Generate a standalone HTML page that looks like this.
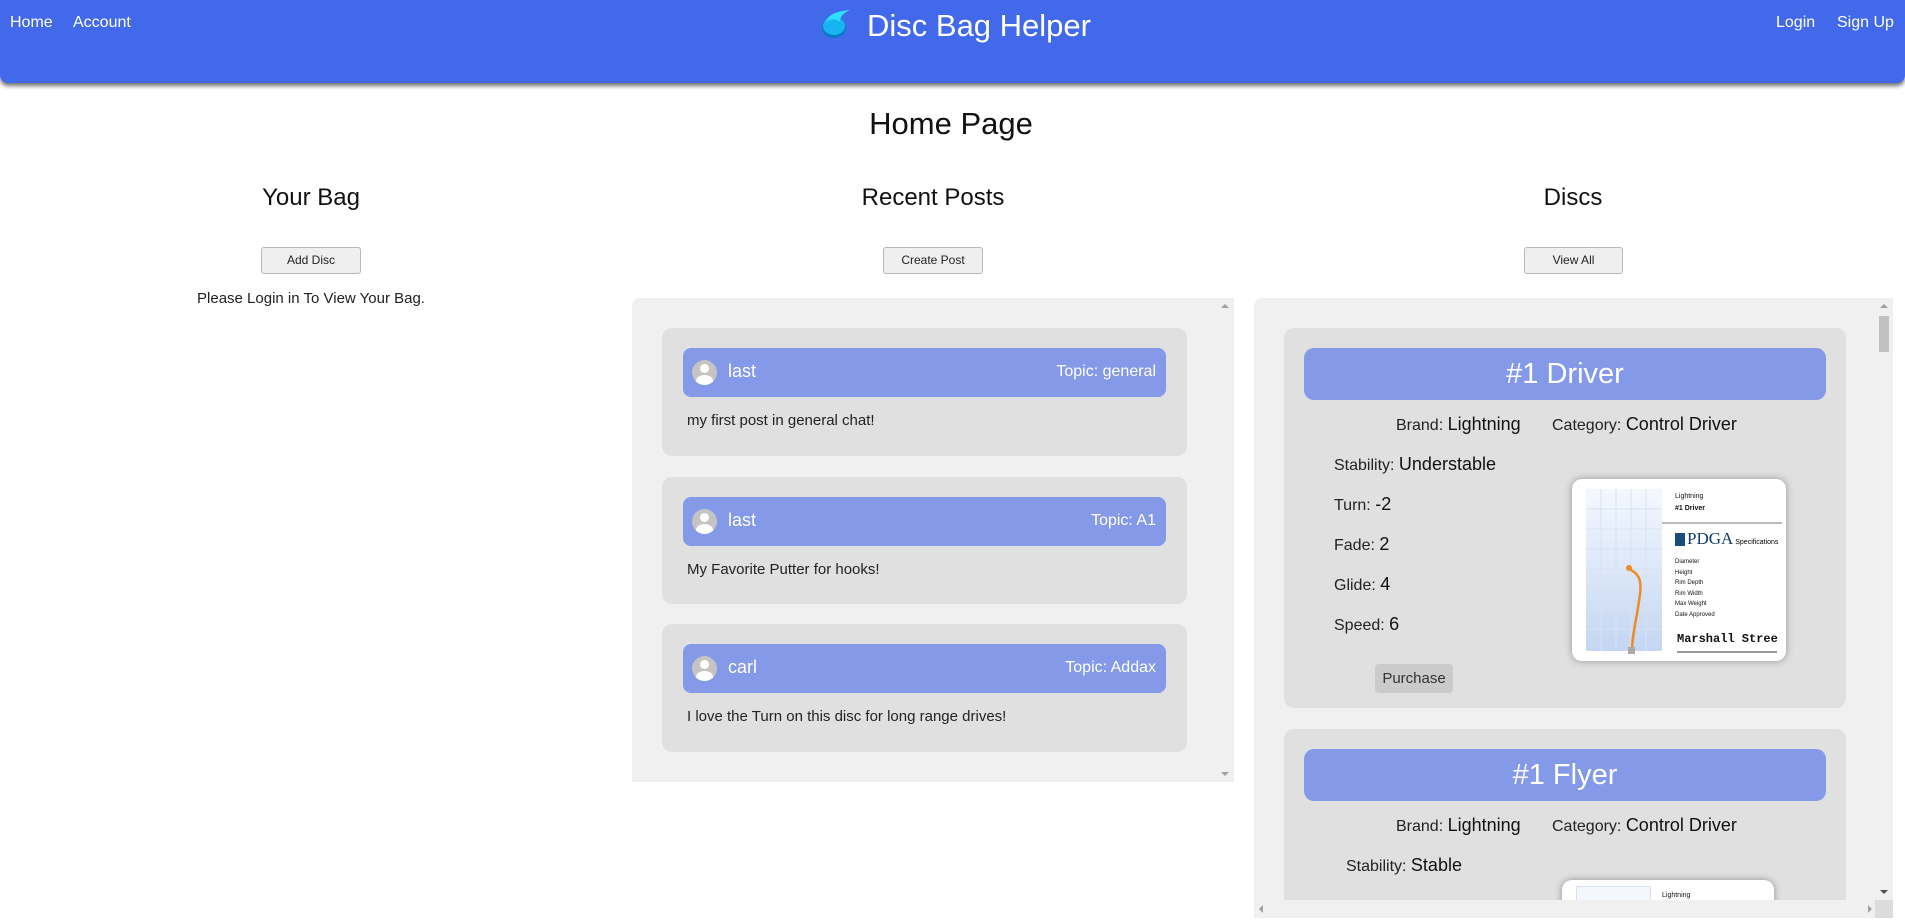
<!DOCTYPE html>
<html style="width:1905px;height:922px;overflow:hidden"><head><meta charset="utf-8"><style>
*{box-sizing:border-box;margin:0;padding:0}
body{width:1905px;height:922px;overflow:hidden;background:#fff;font-family:"Liberation Sans",sans-serif;color:#111;position:relative}
.abs{position:absolute}
.hdr{left:0;top:0;width:1905px;height:83px;background:#4169e9;border-radius:0 0 8px 8px;box-shadow:0 3px 4px rgba(0,0,0,.55)}
.nav{color:#fff;font-size:16px;top:14px}
.h2{font-size:24px;transform:translateX(-50%);white-space:nowrap;color:#111}
.btn{background:#efefef;border:1px solid #b8b8b8;border-radius:3px;font-size:12px;color:#222;text-align:center;line-height:25px;height:27px}
.panel{background:#f0f0f0;border-radius:8px 0 0 0}
.post{left:30px;width:525px;background:#e0e0e0;border-radius:10px}
.ph{position:absolute;left:21px;top:20px;width:483px;height:49px;background:#8499e8;border-radius:8px;color:#fff}
.av{position:absolute;left:9px;top:12px;width:25px;height:25px;border-radius:50%;background:#c4c4c4;overflow:hidden}
.av:before{content:"";position:absolute;left:8px;top:4px;width:9px;height:9px;border-radius:50%;background:#fff}
.av:after{content:"";position:absolute;left:4px;top:15px;width:17px;height:12px;border-radius:50%;background:#fff}
.pn{position:absolute;left:45px;top:13px;font-size:18px}
.pt{position:absolute;right:10px;top:15px;font-size:16px}
.ptxt{position:absolute;left:25px;font-size:15px;color:#222}
.card{left:30px;width:562px;background:#e0e0e0;border-radius:10px}
.ct{position:absolute;left:20px;top:20px;width:522px;height:52px;background:#8499e8;border-radius:10px;color:#fff;font-size:29px;text-align:center;line-height:52px}
.lab{position:absolute;font-size:16px;color:#222;white-space:nowrap}
.lab b{font-weight:normal;font-size:18px;color:#111}
.img{position:absolute;background:#fff;border-radius:10px;box-shadow:0 0 8px rgba(0,0,0,.35);overflow:hidden}
</style></head><body>
<div class="abs hdr"></div>
<div class="abs nav" style="left:10px">Home</div>
<div class="abs nav" style="left:73px">Account</div>
<div class="abs nav" style="left:1776px">Login</div>
<div class="abs nav" style="left:1837px">Sign Up</div>
<svg class="abs" style="left:820px;top:8px" width="34" height="32" viewBox="0 0 34 32">
<ellipse cx="14" cy="20" rx="12" ry="10" fill="#0a78c8"/>
<ellipse cx="14" cy="18" rx="11" ry="9" fill="#16b4f0"/>
<path d="M6 14 C8 6 18 3 30 2 C24 5 20 8 20 14 C16 10 10 11 6 14Z" fill="#2de0ff"/>
</svg>
<div class="abs" style="left:867px;top:8px;font-size:31px;color:#fff">Disc Bag Helper</div>
<div class="abs h2" style="left:951px;top:106px;font-size:31px">Home Page</div>
<div class="abs h2" style="left:311px;top:184px">Your Bag</div>
<div class="abs h2" style="left:933px;top:184px">Recent Posts</div>
<div class="abs h2" style="left:1573px;top:184px">Discs</div>
<div class="abs btn" style="left:261px;top:247px;width:100px">Add Disc</div>
<div class="abs btn" style="left:883px;top:247px;width:100px">Create Post</div>
<div class="abs btn" style="left:1524px;top:247px;width:99px">View All</div>
<div class="abs" style="left:311px;top:290px;font-size:15px;transform:translateX(-50%);white-space:nowrap;color:#222">Please Login in To View Your Bag.</div>

<div class="abs panel" style="left:632px;top:298px;width:602px;height:484px">
<div class="abs" style="right:5px;top:6px;width:0;height:0;border:4px solid transparent;border-bottom-color:#a0a0a0;border-top:0"></div>
<div class="abs" style="right:5px;bottom:6px;width:0;height:0;border:4px solid transparent;border-top-color:#a0a0a0;border-bottom:0"></div>
<div class="abs post" style="top:30px;height:128px"><div class="ph"><div class="av"></div><div class="pn">last</div><div class="pt">Topic: general</div></div><div class="ptxt" style="top:84px">my first post in general chat!</div></div>
<div class="abs post" style="top:179px;height:127px"><div class="ph"><div class="av"></div><div class="pn">last</div><div class="pt">Topic: A1</div></div><div class="ptxt" style="top:84px">My Favorite Putter for hooks!</div></div>
<div class="abs post" style="top:326px;height:128px"><div class="ph"><div class="av"></div><div class="pn">carl</div><div class="pt">Topic: Addax</div></div><div class="ptxt" style="top:84px">I love the Turn on this disc for long range drives!</div></div>
</div>

<div class="abs panel" style="left:1254px;top:298px;width:639px;height:620px;overflow:hidden">
<div class="abs card" style="top:30px;height:380px">
<div class="ct">#1 Driver</div>
<div class="lab" style="left:112px;top:86px">Brand: <b>Lightning</b></div>
<div class="lab" style="left:268px;top:86px">Category: <b>Control Driver</b></div>
<div class="lab" style="left:50px;top:126px">Stability: <b>Understable</b></div>
<div class="lab" style="left:50px;top:166px">Turn: <b>-2</b></div>
<div class="lab" style="left:50px;top:206px">Fade: <b>2</b></div>
<div class="lab" style="left:50px;top:246px">Glide: <b>4</b></div>
<div class="lab" style="left:50px;top:286px">Speed: <b>6</b></div>
<div class="abs" style="left:91px;top:336px;width:78px;height:29px;background:#cbcbcb;border-radius:4px;font-size:15px;line-height:29px;text-align:center;color:#333">Purchase</div>
<div class="img" style="left:288px;top:151px;width:214px;height:182px">
<svg width="214" height="182" viewBox="0 0 214 182" style="position:absolute;left:0;top:0">
<defs><linearGradient id="g" x1="0" y1="0" x2="0" y2="1"><stop offset="0" stop-color="#f4f8fe"/><stop offset="1" stop-color="#c4d6f2"/></linearGradient></defs>
<rect x="14" y="10" width="76" height="162" fill="url(#g)"/>
<g stroke="#d6e2f4" stroke-width="1"><line x1="29" y1="10" x2="29" y2="172"/><line x1="44" y1="10" x2="44" y2="172"/><line x1="59" y1="10" x2="59" y2="172"/><line x1="74" y1="10" x2="74" y2="172"/><line x1="14" y1="30" x2="90" y2="30"/><line x1="14" y1="50" x2="90" y2="50"/><line x1="14" y1="70" x2="90" y2="70"/><line x1="14" y1="90" x2="90" y2="90"/><line x1="14" y1="110" x2="90" y2="110"/><line x1="14" y1="130" x2="90" y2="130"/><line x1="14" y1="150" x2="90" y2="150"/></g>
<path d="M57 90 C66 94 70 100 68 115 C65 140 60 155 60 172" stroke="#f08a24" stroke-width="2.5" fill="none"/>
<circle cx="57" cy="89" r="3" fill="#f08a24"/><rect x="56" y="168" width="7" height="7" fill="#aaa"/>
<line x1="90" y1="44" x2="210" y2="44" stroke="#777"/>
<rect x="103" y="54" width="10" height="13" fill="#1a4e7a"/>
<line x1="105" y1="173" x2="205" y2="173" stroke="#333"/>
</svg>
<div class="abs" style="left:103px;top:12px;font-size:7px;line-height:12px">Lightning<br><b>#1 Driver</b></div>
<div class="abs" style="left:115px;top:50px;font-family:'Liberation Serif',serif;font-size:17px;color:#123d6a">PDGA<span style="font-family:'Liberation Sans';font-size:7px;color:#000"> Specifications</span></div>
<div class="abs" style="left:103px;top:78px;font-size:6px;line-height:10.5px">Diameter<br>Height<br>Rim Depth<br>Rim Width<br>Max Weight<br>Date Approved</div>
<div class="abs" style="left:105px;top:153px;font-family:'Liberation Mono',monospace;font-size:12px;font-weight:bold">Marshall Stree</div>
</div>
</div>
<div class="abs card" style="top:431px;height:300px">
<div class="ct">#1 Flyer</div>
<div class="lab" style="left:112px;top:86px">Brand: <b>Lightning</b></div>
<div class="lab" style="left:268px;top:86px">Category: <b>Control Driver</b></div>
<div class="lab" style="left:62px;top:126px">Stability: <b>Stable</b></div>
<div class="img" style="left:278px;top:151px;width:212px;height:100px"><div class="abs" style="left:14px;top:6px;width:75px;height:100px;border:1px solid #d6e2f4;background:#f4f8fe"></div><div class="abs" style="left:100px;top:12px;font-size:7px">Lightning</div></div>
</div>
<div class="abs" style="left:0;bottom:0;width:639px;height:18px;background:#f0f0f0"></div>
<div class="abs" style="left:5px;bottom:5px;width:0;height:0;border:4px solid transparent;border-right-color:#a0a0a0;border-left:0"></div>
<div class="abs" style="left:614px;bottom:5px;width:0;height:0;border:4px solid transparent;border-left-color:#a0a0a0;border-right:0"></div>
<div class="abs" style="right:0;top:0;width:18px;height:620px;background:#f0f0f0"></div>
<div class="abs" style="right:4px;top:18px;width:10px;height:36px;background:#c1c1c1"></div>
<div class="abs" style="right:5px;top:6px;width:0;height:0;border:4px solid transparent;border-bottom-color:#a0a0a0;border-top:0"></div>
<div class="abs" style="right:5px;bottom:24px;width:0;height:0;border:4px solid transparent;border-top-color:#505050;border-bottom:0"></div>
<div class="abs" style="right:0;bottom:0;width:18px;height:18px;background:#dcdcdc"></div>
</div>
</body></html>
